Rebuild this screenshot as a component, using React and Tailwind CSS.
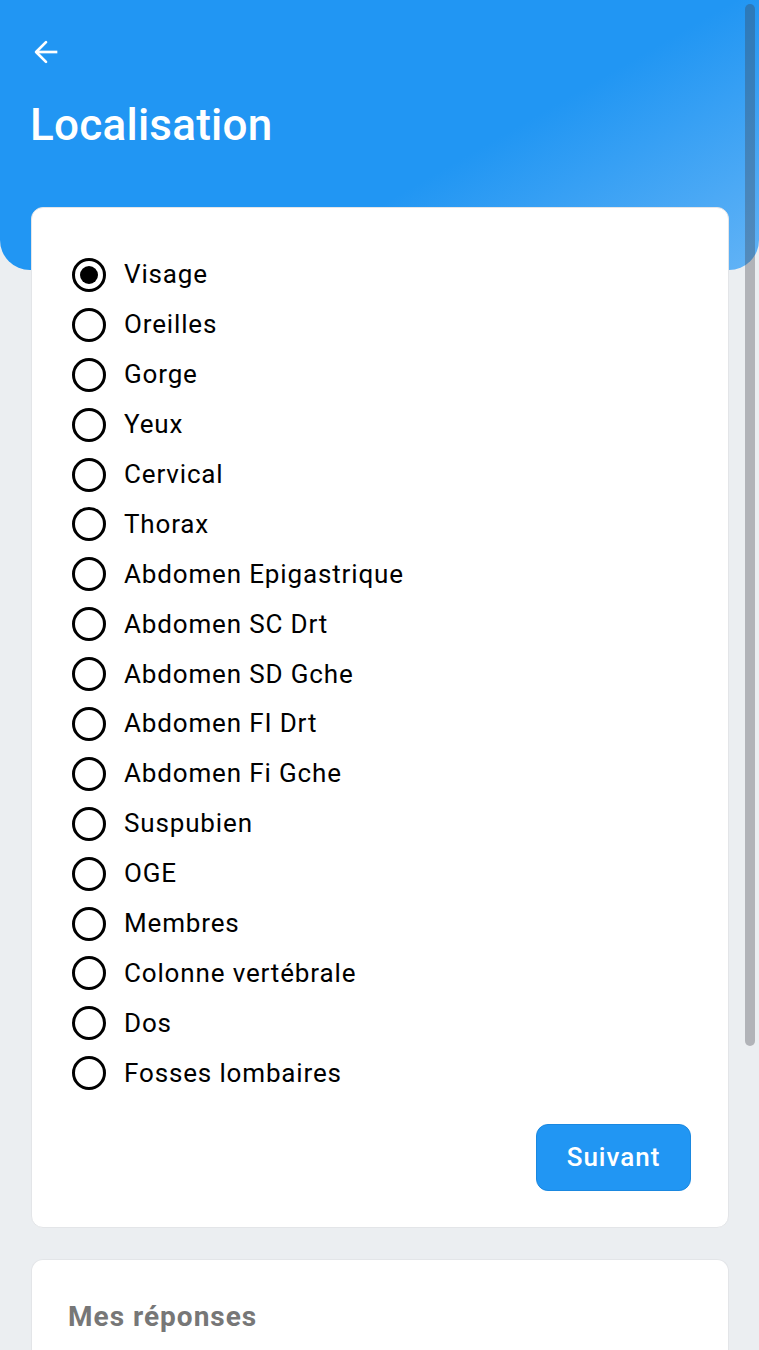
import React, { useState } from 'react';

const options = [
  'Visage',
  'Oreilles',
  'Gorge',
  'Yeux',
  'Cervical',
  'Thorax',
  'Abdomen Epigastrique',
  'Abdomen SC Drt',
  'Abdomen SD Gche',
  'Abdomen FI Drt',
  'Abdomen Fi Gche',
  'Suspubien',
  'OGE',
  'Membres',
  'Colonne vertébrale',
  'Dos',
  'Fosses lombaires',
];

export default function App() {
  const [selected, setSelected] = useState('Visage');

  return (
    <div className="relative min-h-[1350px] bg-[#ebeef1] font-['Roboto',sans-serif] overflow-hidden">
      {/* Header */}
      <div className="h-[270px] rounded-b-[30px] bg-[linear-gradient(150deg,#2196f3_0%,#2196f3_60%,#62b3f6_100%)] px-[30px] pt-[35px]">
        <button className="text-white block -ml-[1px]">
          <svg width="34" height="34" viewBox="0 0 24 24" fill="none" stroke="currentColor" strokeWidth="1.9">
            <path d="M20 12H5.5" />
            <path d="M12 5l-7 7 7 7" strokeLinecap="round" strokeLinejoin="round" />
          </svg>
        </button>
        <h1 className="mt-[34px] text-[44px] leading-none font-medium text-white tracking-[0.25px]">Localisation</h1>
      </div>

      {/* Options card */}
      <div className="relative -mt-[63px] ml-[31px] mr-[30px] bg-white rounded-[12px] border border-[#e3e5e8] pt-[42px] pb-[36px] pl-[40px] pr-[37px]">
        <div className="flex flex-col">
          {options.map((o) => (
            <label key={o} className="flex items-center h-[49.9px] cursor-pointer" onClick={() => setSelected(o)}>
              <span className="w-[34px] h-[34px] rounded-full border-[3px] border-black flex items-center justify-center shrink-0">
                {selected === o && <span className="w-[18px] h-[18px] rounded-full bg-black" />}
              </span>
              <span className="ml-[18px] text-[26px] text-black tracking-[0.85px]">{o}</span>
            </label>
          ))}
        </div>
        <div className="flex justify-end mt-[26px]">
          <button className="w-[155px] h-[67px] rounded-[12px] bg-[#2196f3] border border-[#1a88e0] text-white text-[26px] font-medium tracking-[1px]">
            Suivant
          </button>
        </div>
      </div>

      {/* Answers card */}
      <div className="mt-[31px] ml-[31px] mr-[30px] bg-white rounded-t-[12px] border border-[#e3e5e8] border-b-0 h-[120px] px-[36px] pt-[36px]">
        <h2 className="text-[28px] font-bold text-[#777777] tracking-[1px]">Mes réponses</h2>
      </div>

      {/* Overlay scrollbar */}
      <div className="absolute right-[4px] top-[4px] w-[10px] h-[1042px] rounded-full bg-[rgba(60,60,70,0.33)]" />
    </div>
  );
}
